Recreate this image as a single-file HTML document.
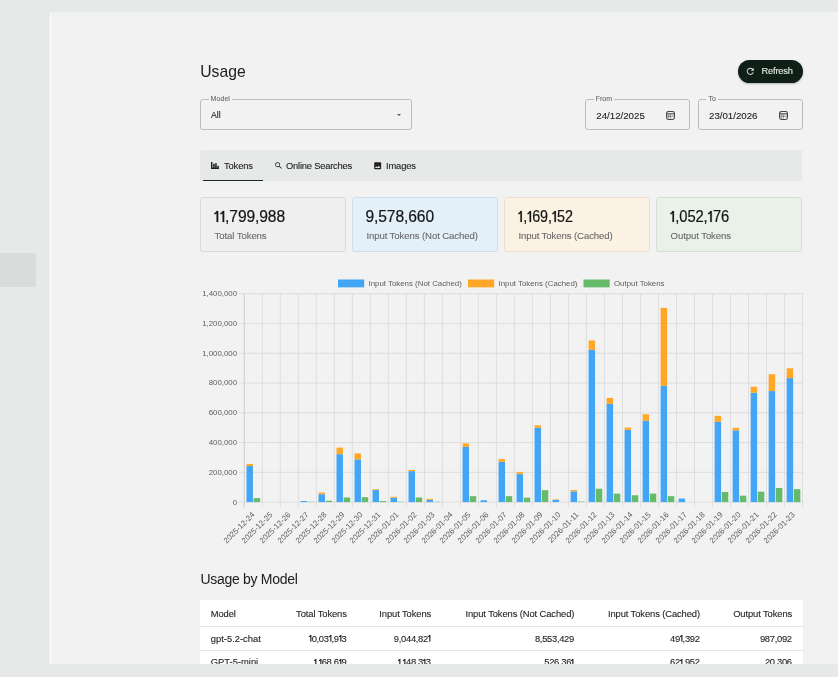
<!DOCTYPE html>
<html><head><meta charset="utf-8">
<style>
*{box-sizing:border-box;margin:0;padding:0}
html,body{width:838px;height:677px;overflow:hidden;background:#e6e9e8;font-family:"Liberation Sans",sans-serif;color:#1c1c1c}
.abs{position:absolute}
#panel{position:absolute;left:49px;top:12px;width:789px;height:652px;background:#f2f2f2;overflow:hidden}
#side{position:absolute;left:0;top:253px;width:36px;height:34px;background:#d8dcda;border-top-right-radius:2px;border-bottom-right-radius:2px}
.t{position:absolute;white-space:nowrap;line-height:1}
.field{position:absolute;border:1px solid #bdbdbd;border-radius:3px}
.flabel{position:absolute;top:-4.3px;font-size:7.1px;color:#6b6b6b;background:#f2f2f2;padding:0 2px;line-height:7px}
.card{position:absolute;top:197px;height:54.6px;width:146.3px;border:1px solid #dcdcdc;border-radius:2.5px}
.num{position:absolute;left:12.2px;top:11.2px;font-size:15.6px;color:#151515;line-height:1;white-space:nowrap;letter-spacing:-0.1px}
.lab{position:absolute;left:13.5px;top:32.6px;font-size:9.6px;letter-spacing:-0.1px;color:#6a6a6a;line-height:1;white-space:nowrap}
#bottom{position:absolute;left:0;top:664px;width:838px;height:13px;background:#e6e9e8}
table{border-collapse:collapse}
.th,.td{position:absolute;font-size:9.4px;-webkit-text-stroke:0.12px currentColor;line-height:1;white-space:nowrap;color:#222}
#w div{-webkit-text-stroke:0.1px currentColor}
#w .num{-webkit-text-stroke:0.2px currentColor}
.o{display:inline-block;width:0.36em;height:0.7em;vertical-align:baseline;overflow:visible}
.o2{width:0.30em}
#w{position:absolute;left:0;top:0;width:838px;height:677px;will-change:transform;overflow:hidden}
</style></head><body><div id="w">
<div id="side"></div>
<div id="panel"></div>
<div class="abs" style="left:47.6px;top:12px;width:1.4px;height:652px;background:#e3e7e5"></div>
<div class="abs" style="left:49.6px;top:12px;width:2.2px;height:652px;background:#f5f6f6"></div>
<div class="abs" style="left:49px;top:12.2px;width:789px;height:2.6px;background:#f0f2f1"></div>
<div class="t" style="left:200.2px;top:64.3px;font-size:15.7px;letter-spacing:0.05px;color:#1e1e1e;-webkit-text-stroke:0.02px currentColor">Usage</div>
<div class="abs" style="left:738.4px;top:59.6px;width:64.2px;height:23.4px;border-radius:12px;background:#0f1e17;box-shadow:0 1px 2px rgba(0,0,0,0.25)"></div>
<svg class="abs" style="left:745.25px;top:66.15px" width="10.5" height="10.5" viewBox="0 0 24 24"><path fill="#dfe6e2" d="M17.65 6.35A7.958 7.958 0 0 0 12 4c-4.42 0-7.99 3.58-7.99 8s3.57 8 7.99 8c3.73 0 6.84-2.55 7.73-6h-2.08A5.99 5.99 0 0 1 12 18c-3.31 0-6-2.69-6-6s2.69-6 6-6c1.66 0 3.14.69 4.22 1.78L13 11h7V4l-2.35 2.35z"/></svg>
<div class="t" style="left:761.6px;top:66.6px;font-size:9.3px;letter-spacing:-0.2px;color:#e6ece8">Refresh</div>

<div class="field" style="left:200px;top:98.8px;width:211.5px;height:31.6px"><div class="flabel" style="left:7.6px">Model</div></div>
<div class="t" style="left:211px;top:110.5px;font-size:8.7px">All</div>
<div class="abs" style="left:397px;top:114px;width:0;height:0;border-left:2.2px solid transparent;border-right:2.2px solid transparent;border-top:2.2px solid #555"></div>

<div class="field" style="left:585px;top:98.8px;width:105.4px;height:31.6px"><div class="flabel" style="left:7.6px">From</div></div>
<div class="t" style="left:596.3px;top:110.5px;font-size:9.7px">24/12/2025</div>
<div class="abs" style="left:665.9px;top:110.8px;line-height:0"><svg width="9" height="9" viewBox="0 0 9 9"><rect x="0.55" y="0.55" width="7.9" height="7.9" rx="1.9" fill="none" stroke="#474747" stroke-width="1.1"/><rect x="1" y="2.3" width="7" height="1.1" fill="#474747"/><line x1="2.6" y1="3.4" x2="2.6" y2="7.6" stroke="#6a6a6a" stroke-width="0.7"/><line x1="4.4" y1="3.4" x2="4.4" y2="7.6" stroke="#6a6a6a" stroke-width="0.7"/><line x1="1" y1="5.2" x2="8" y2="5.2" stroke="#6a6a6a" stroke-width="0.7"/></svg></div>
<div class="field" style="left:697.8px;top:98.8px;width:105.2px;height:31.6px"><div class="flabel" style="left:7.6px">To</div></div>
<div class="t" style="left:709px;top:110.5px;font-size:9.7px">23/01/2026</div>
<div class="abs" style="left:778.7px;top:110.8px;line-height:0"><svg width="9" height="9" viewBox="0 0 9 9"><rect x="0.55" y="0.55" width="7.9" height="7.9" rx="1.9" fill="none" stroke="#474747" stroke-width="1.1"/><rect x="1" y="2.3" width="7" height="1.1" fill="#474747"/><line x1="2.6" y1="3.4" x2="2.6" y2="7.6" stroke="#6a6a6a" stroke-width="0.7"/><line x1="4.4" y1="3.4" x2="4.4" y2="7.6" stroke="#6a6a6a" stroke-width="0.7"/><line x1="1" y1="5.2" x2="8" y2="5.2" stroke="#6a6a6a" stroke-width="0.7"/></svg></div>

<div class="abs" style="left:199.9px;top:150.3px;width:602.4px;height:30.5px;background:#e6e9e8;border-radius:2px"></div>
<div class="abs" style="left:202.8px;top:179.8px;width:60.2px;height:1.6px;background:#1b2b24"></div>
<svg class="abs" style="left:211.2px;top:161.9px" width="7.8" height="7" viewBox="0 0 7.8 7"><rect x="0" y="0" width="1.4" height="7" fill="#1e1e1e"/><rect x="0" y="5.7" width="7.8" height="1.3" fill="#1e1e1e"/><rect x="2.2" y="1.8" width="1.5" height="5" fill="#1e1e1e"/><rect x="4.2" y="1.2" width="1.5" height="5" fill="#1e1e1e"/><rect x="6.3" y="3.8" width="1.5" height="3" fill="#1e1e1e"/></svg>
<div class="t" style="left:224px;top:161.1px;font-size:9.4px;letter-spacing:-0.15px;color:#222">Tokens</div>
<svg class="abs" style="left:273.55px;top:161.15px" width="9.2" height="9.2" viewBox="0 0 24 24"><path fill="#222" d="M15.5 14h-.79l-.28-.27A6.471 6.471 0 0 0 16 9.5 6.5 6.5 0 1 0 9.5 16c1.61 0 3.09-.59 4.23-1.57l.27.28v.79l5 4.99L20.49 19l-4.99-5zm-6 0C7.01 14 5 11.99 5 9.5S7.01 5 9.5 5 14 7.01 14 9.5 11.99 14 9.5 14z"/></svg>
<div class="t" style="left:286px;top:161.1px;font-size:9.4px;letter-spacing:-0.22px;color:#222">Online Searches</div>
<svg class="abs" style="left:373.33px;top:161.13px" width="9.33" height="9.33" viewBox="0 0 24 24"><path fill="#222" d="M21 19V5c0-1.1-.9-2-2-2H5c-1.1 0-2 .9-2 2v14c0 1.1.9 2 2 2h14c1.1 0 2-.9 2-2zM8.5 13.5l2.5 3.01L14.5 12l4.5 6H5l3.5-4.5z"/></svg>
<div class="t" style="left:386px;top:161.1px;font-size:9.4px;letter-spacing:-0.15px;color:#222">Images</div>

<div class="card" style="left:200.1px;background:#efefef;border-color:#d9d9d9"><div class="num" style="left:12.8px"><svg class="o" viewBox="0 0 36 70"><path d="M16.5 0h10.5v70h-10.5V15C13 18.5 8.5 20.5 2.5 21.5v-9C9.5 11 14 6.5 16.5 0z" fill="currentColor" stroke="currentColor" stroke-width="1.2"/></svg><svg class="o" viewBox="0 0 36 70"><path d="M16.5 0h10.5v70h-10.5V15C13 18.5 8.5 20.5 2.5 21.5v-9C9.5 11 14 6.5 16.5 0z" fill="currentColor" stroke="currentColor" stroke-width="1.2"/></svg>,799,988</div><div class="lab">Total Tokens</div></div>
<div class="card" style="left:351.9px;background:#e3eff9;border-color:#d0dce6"><div class="num" style="left:12.6px">9,578,660</div><div class="lab">Input Tokens (Not Cached)</div></div>
<div class="card" style="left:503.9px;background:#fcf2e3;border-color:#ebdfcc"><div class="num" style="left:13.5px;transform:scaleX(0.92);transform-origin:0 0"><svg class="o" viewBox="0 0 36 70"><path d="M16.5 0h10.5v70h-10.5V15C13 18.5 8.5 20.5 2.5 21.5v-9C9.5 11 14 6.5 16.5 0z" fill="currentColor" stroke="currentColor" stroke-width="1.2"/></svg>,<svg class="o" viewBox="0 0 36 70"><path d="M16.5 0h10.5v70h-10.5V15C13 18.5 8.5 20.5 2.5 21.5v-9C9.5 11 14 6.5 16.5 0z" fill="currentColor" stroke="currentColor" stroke-width="1.2"/></svg>69,<svg class="o" viewBox="0 0 36 70"><path d="M16.5 0h10.5v70h-10.5V15C13 18.5 8.5 20.5 2.5 21.5v-9C9.5 11 14 6.5 16.5 0z" fill="currentColor" stroke="currentColor" stroke-width="1.2"/></svg>52</div><div class="lab">Input Tokens (Cached)</div></div>
<div class="card" style="left:656.1px;background:#e8f2e9;border-color:#d3dfd5"><div class="num" style="left:12.8px;transform:scaleX(0.945);transform-origin:0 0"><svg class="o" viewBox="0 0 36 70"><path d="M16.5 0h10.5v70h-10.5V15C13 18.5 8.5 20.5 2.5 21.5v-9C9.5 11 14 6.5 16.5 0z" fill="currentColor" stroke="currentColor" stroke-width="1.2"/></svg>,052,<svg class="o" viewBox="0 0 36 70"><path d="M16.5 0h10.5v70h-10.5V15C13 18.5 8.5 20.5 2.5 21.5v-9C9.5 11 14 6.5 16.5 0z" fill="currentColor" stroke="currentColor" stroke-width="1.2"/></svg>76</div><div class="lab">Output Tokens</div></div>

<svg width="838" height="677" viewBox="0 0 838 677" style="position:absolute;left:0;top:0" font-family="Liberation Sans, sans-serif">
<line x1="244.30" y1="293.70" x2="244.30" y2="507.30" stroke="#d7d7d7" stroke-width="0.75"/>
<line x1="262.31" y1="293.70" x2="262.31" y2="507.30" stroke="#d7d7d7" stroke-width="0.75"/>
<line x1="280.31" y1="293.70" x2="280.31" y2="507.30" stroke="#d7d7d7" stroke-width="0.75"/>
<line x1="298.32" y1="293.70" x2="298.32" y2="507.30" stroke="#d7d7d7" stroke-width="0.75"/>
<line x1="316.33" y1="293.70" x2="316.33" y2="507.30" stroke="#d7d7d7" stroke-width="0.75"/>
<line x1="334.33" y1="293.70" x2="334.33" y2="507.30" stroke="#d7d7d7" stroke-width="0.75"/>
<line x1="352.34" y1="293.70" x2="352.34" y2="507.30" stroke="#d7d7d7" stroke-width="0.75"/>
<line x1="370.35" y1="293.70" x2="370.35" y2="507.30" stroke="#d7d7d7" stroke-width="0.75"/>
<line x1="388.35" y1="293.70" x2="388.35" y2="507.30" stroke="#d7d7d7" stroke-width="0.75"/>
<line x1="406.36" y1="293.70" x2="406.36" y2="507.30" stroke="#d7d7d7" stroke-width="0.75"/>
<line x1="424.36" y1="293.70" x2="424.36" y2="507.30" stroke="#d7d7d7" stroke-width="0.75"/>
<line x1="442.37" y1="293.70" x2="442.37" y2="507.30" stroke="#d7d7d7" stroke-width="0.75"/>
<line x1="460.38" y1="293.70" x2="460.38" y2="507.30" stroke="#d7d7d7" stroke-width="0.75"/>
<line x1="478.38" y1="293.70" x2="478.38" y2="507.30" stroke="#d7d7d7" stroke-width="0.75"/>
<line x1="496.39" y1="293.70" x2="496.39" y2="507.30" stroke="#d7d7d7" stroke-width="0.75"/>
<line x1="514.40" y1="293.70" x2="514.40" y2="507.30" stroke="#d7d7d7" stroke-width="0.75"/>
<line x1="532.40" y1="293.70" x2="532.40" y2="507.30" stroke="#d7d7d7" stroke-width="0.75"/>
<line x1="550.41" y1="293.70" x2="550.41" y2="507.30" stroke="#d7d7d7" stroke-width="0.75"/>
<line x1="568.42" y1="293.70" x2="568.42" y2="507.30" stroke="#d7d7d7" stroke-width="0.75"/>
<line x1="586.42" y1="293.70" x2="586.42" y2="507.30" stroke="#d7d7d7" stroke-width="0.75"/>
<line x1="604.43" y1="293.70" x2="604.43" y2="507.30" stroke="#d7d7d7" stroke-width="0.75"/>
<line x1="622.44" y1="293.70" x2="622.44" y2="507.30" stroke="#d7d7d7" stroke-width="0.75"/>
<line x1="640.44" y1="293.70" x2="640.44" y2="507.30" stroke="#d7d7d7" stroke-width="0.75"/>
<line x1="658.45" y1="293.70" x2="658.45" y2="507.30" stroke="#d7d7d7" stroke-width="0.75"/>
<line x1="676.45" y1="293.70" x2="676.45" y2="507.30" stroke="#d7d7d7" stroke-width="0.75"/>
<line x1="694.46" y1="293.70" x2="694.46" y2="507.30" stroke="#d7d7d7" stroke-width="0.75"/>
<line x1="712.47" y1="293.70" x2="712.47" y2="507.30" stroke="#d7d7d7" stroke-width="0.75"/>
<line x1="730.47" y1="293.70" x2="730.47" y2="507.30" stroke="#d7d7d7" stroke-width="0.75"/>
<line x1="748.48" y1="293.70" x2="748.48" y2="507.30" stroke="#d7d7d7" stroke-width="0.75"/>
<line x1="766.49" y1="293.70" x2="766.49" y2="507.30" stroke="#d7d7d7" stroke-width="0.75"/>
<line x1="784.49" y1="293.70" x2="784.49" y2="507.30" stroke="#d7d7d7" stroke-width="0.75"/>
<line x1="802.50" y1="293.70" x2="802.50" y2="507.30" stroke="#d7d7d7" stroke-width="0.75"/>
<line x1="239.10" y1="502.10" x2="802.50" y2="502.10" stroke="#d7d7d7" stroke-width="0.75"/>
<text x="237.10" y="504.50" font-size="7.86" fill="#5c5c5c" text-anchor="end">0</text>
<line x1="239.10" y1="472.33" x2="802.50" y2="472.33" stroke="#d7d7d7" stroke-width="0.75"/>
<text x="237.10" y="474.73" font-size="7.86" fill="#5c5c5c" text-anchor="end">200,000</text>
<line x1="239.10" y1="442.56" x2="802.50" y2="442.56" stroke="#d7d7d7" stroke-width="0.75"/>
<text x="237.10" y="444.96" font-size="7.86" fill="#5c5c5c" text-anchor="end">400,000</text>
<line x1="239.10" y1="412.79" x2="802.50" y2="412.79" stroke="#d7d7d7" stroke-width="0.75"/>
<text x="237.10" y="415.19" font-size="7.86" fill="#5c5c5c" text-anchor="end">600,000</text>
<line x1="239.10" y1="383.01" x2="802.50" y2="383.01" stroke="#d7d7d7" stroke-width="0.75"/>
<text x="237.10" y="385.41" font-size="7.86" fill="#5c5c5c" text-anchor="end">800,000</text>
<line x1="239.10" y1="353.24" x2="802.50" y2="353.24" stroke="#d7d7d7" stroke-width="0.75"/>
<text x="237.10" y="355.64" font-size="7.86" fill="#5c5c5c" text-anchor="end">1,000,000</text>
<line x1="239.10" y1="323.47" x2="802.50" y2="323.47" stroke="#d7d7d7" stroke-width="0.75"/>
<text x="237.10" y="325.87" font-size="7.86" fill="#5c5c5c" text-anchor="end">1,200,000</text>
<line x1="239.10" y1="293.70" x2="802.50" y2="293.70" stroke="#d7d7d7" stroke-width="0.75"/>
<text x="237.10" y="296.10" font-size="7.86" fill="#5c5c5c" text-anchor="end">1,400,000</text>
<line x1="244.30" y1="293.70" x2="244.30" y2="507.30" stroke="#d0d0d0" stroke-width="0.8"/>
<rect x="246.46" y="465.93" width="6.48" height="36.17" fill="#42a5f5"/>
<rect x="246.46" y="463.99" width="6.48" height="1.94" fill="#ffa726"/>
<rect x="253.66" y="498.08" width="6.48" height="4.02" fill="#66bb6a"/>
<rect x="300.48" y="501.06" width="6.48" height="1.04" fill="#42a5f5"/>
<rect x="307.68" y="501.80" width="6.48" height="0.30" fill="#66bb6a"/>
<rect x="318.49" y="494.21" width="6.48" height="7.89" fill="#42a5f5"/>
<rect x="318.49" y="492.57" width="6.48" height="1.64" fill="#ffa726"/>
<rect x="325.69" y="500.76" width="6.48" height="1.34" fill="#66bb6a"/>
<rect x="336.49" y="454.17" width="6.48" height="47.93" fill="#42a5f5"/>
<rect x="336.49" y="447.62" width="6.48" height="6.55" fill="#ffa726"/>
<rect x="343.70" y="497.49" width="6.48" height="4.61" fill="#66bb6a"/>
<rect x="354.50" y="459.38" width="6.48" height="42.72" fill="#42a5f5"/>
<rect x="354.50" y="453.42" width="6.48" height="5.95" fill="#ffa726"/>
<rect x="361.70" y="497.19" width="6.48" height="4.91" fill="#66bb6a"/>
<rect x="372.51" y="490.04" width="6.48" height="12.06" fill="#42a5f5"/>
<rect x="372.51" y="489.30" width="6.48" height="0.74" fill="#ffa726"/>
<rect x="379.71" y="501.06" width="6.48" height="1.04" fill="#66bb6a"/>
<rect x="390.51" y="497.78" width="6.48" height="4.32" fill="#42a5f5"/>
<rect x="390.51" y="496.74" width="6.48" height="1.04" fill="#ffa726"/>
<rect x="397.71" y="501.80" width="6.48" height="0.30" fill="#66bb6a"/>
<rect x="408.52" y="471.14" width="6.48" height="30.96" fill="#42a5f5"/>
<rect x="408.52" y="469.95" width="6.48" height="1.19" fill="#ffa726"/>
<rect x="415.72" y="497.49" width="6.48" height="4.61" fill="#66bb6a"/>
<rect x="426.53" y="499.87" width="6.48" height="2.23" fill="#42a5f5"/>
<rect x="426.53" y="498.83" width="6.48" height="1.04" fill="#ffa726"/>
<rect x="433.73" y="501.80" width="6.48" height="0.30" fill="#66bb6a"/>
<rect x="462.54" y="446.87" width="6.48" height="55.23" fill="#42a5f5"/>
<rect x="462.54" y="443.45" width="6.48" height="3.42" fill="#ffa726"/>
<rect x="469.74" y="496.15" width="6.48" height="5.95" fill="#66bb6a"/>
<rect x="480.54" y="500.31" width="6.48" height="1.79" fill="#42a5f5"/>
<rect x="498.55" y="461.76" width="6.48" height="40.34" fill="#42a5f5"/>
<rect x="498.55" y="459.08" width="6.48" height="2.68" fill="#ffa726"/>
<rect x="505.75" y="496.15" width="6.48" height="5.95" fill="#66bb6a"/>
<rect x="516.56" y="474.11" width="6.48" height="27.99" fill="#42a5f5"/>
<rect x="516.56" y="472.18" width="6.48" height="1.94" fill="#ffa726"/>
<rect x="523.76" y="497.63" width="6.48" height="4.47" fill="#66bb6a"/>
<rect x="534.56" y="427.67" width="6.48" height="74.43" fill="#42a5f5"/>
<rect x="534.56" y="425.29" width="6.48" height="2.38" fill="#ffa726"/>
<rect x="541.77" y="490.19" width="6.48" height="11.91" fill="#66bb6a"/>
<rect x="552.57" y="499.87" width="6.48" height="2.23" fill="#42a5f5"/>
<rect x="552.57" y="499.42" width="6.48" height="0.45" fill="#ffa726"/>
<rect x="570.58" y="491.38" width="6.48" height="10.72" fill="#42a5f5"/>
<rect x="570.58" y="490.04" width="6.48" height="1.34" fill="#ffa726"/>
<rect x="577.78" y="501.65" width="6.48" height="0.45" fill="#66bb6a"/>
<rect x="588.58" y="349.82" width="6.48" height="152.28" fill="#42a5f5"/>
<rect x="588.58" y="340.44" width="6.48" height="9.38" fill="#ffa726"/>
<rect x="595.79" y="488.70" width="6.48" height="13.40" fill="#66bb6a"/>
<rect x="606.59" y="403.85" width="6.48" height="98.25" fill="#42a5f5"/>
<rect x="606.59" y="397.90" width="6.48" height="5.95" fill="#ffa726"/>
<rect x="613.79" y="493.62" width="6.48" height="8.48" fill="#66bb6a"/>
<rect x="624.60" y="429.90" width="6.48" height="72.20" fill="#42a5f5"/>
<rect x="624.60" y="427.52" width="6.48" height="2.38" fill="#ffa726"/>
<rect x="631.80" y="495.25" width="6.48" height="6.85" fill="#66bb6a"/>
<rect x="642.60" y="420.68" width="6.48" height="81.42" fill="#42a5f5"/>
<rect x="642.60" y="414.27" width="6.48" height="6.40" fill="#ffa726"/>
<rect x="649.81" y="493.62" width="6.48" height="8.48" fill="#66bb6a"/>
<rect x="660.61" y="385.84" width="6.48" height="116.26" fill="#42a5f5"/>
<rect x="660.61" y="307.84" width="6.48" height="78.00" fill="#ffa726"/>
<rect x="667.81" y="496.15" width="6.48" height="5.95" fill="#66bb6a"/>
<rect x="678.62" y="498.53" width="6.48" height="3.57" fill="#42a5f5"/>
<rect x="714.63" y="421.87" width="6.48" height="80.23" fill="#42a5f5"/>
<rect x="714.63" y="415.76" width="6.48" height="6.10" fill="#ffa726"/>
<rect x="721.83" y="491.98" width="6.48" height="10.12" fill="#66bb6a"/>
<rect x="732.63" y="430.35" width="6.48" height="71.75" fill="#42a5f5"/>
<rect x="732.63" y="427.82" width="6.48" height="2.53" fill="#ffa726"/>
<rect x="739.84" y="495.70" width="6.48" height="6.40" fill="#66bb6a"/>
<rect x="750.64" y="392.69" width="6.48" height="109.41" fill="#42a5f5"/>
<rect x="750.64" y="386.74" width="6.48" height="5.95" fill="#ffa726"/>
<rect x="757.84" y="491.68" width="6.48" height="10.42" fill="#66bb6a"/>
<rect x="768.65" y="391.05" width="6.48" height="111.05" fill="#42a5f5"/>
<rect x="768.65" y="374.23" width="6.48" height="16.82" fill="#ffa726"/>
<rect x="775.85" y="487.96" width="6.48" height="14.14" fill="#66bb6a"/>
<rect x="786.65" y="378.10" width="6.48" height="124.00" fill="#42a5f5"/>
<rect x="786.65" y="368.28" width="6.48" height="9.82" fill="#ffa726"/>
<rect x="793.86" y="489.15" width="6.48" height="12.95" fill="#66bb6a"/>
<text transform="translate(253.30,513.50) rotate(-45)" font-size="7.86" fill="#5c5c5c" text-anchor="end" dominant-baseline="central">2025-12-24</text>
<text transform="translate(271.31,513.50) rotate(-45)" font-size="7.86" fill="#5c5c5c" text-anchor="end" dominant-baseline="central">2025-12-25</text>
<text transform="translate(289.32,513.50) rotate(-45)" font-size="7.86" fill="#5c5c5c" text-anchor="end" dominant-baseline="central">2025-12-26</text>
<text transform="translate(307.32,513.50) rotate(-45)" font-size="7.86" fill="#5c5c5c" text-anchor="end" dominant-baseline="central">2025-12-27</text>
<text transform="translate(325.33,513.50) rotate(-45)" font-size="7.86" fill="#5c5c5c" text-anchor="end" dominant-baseline="central">2025-12-28</text>
<text transform="translate(343.34,513.50) rotate(-45)" font-size="7.86" fill="#5c5c5c" text-anchor="end" dominant-baseline="central">2025-12-29</text>
<text transform="translate(361.34,513.50) rotate(-45)" font-size="7.86" fill="#5c5c5c" text-anchor="end" dominant-baseline="central">2025-12-30</text>
<text transform="translate(379.35,513.50) rotate(-45)" font-size="7.86" fill="#5c5c5c" text-anchor="end" dominant-baseline="central">2025-12-31</text>
<text transform="translate(397.35,513.50) rotate(-45)" font-size="7.86" fill="#5c5c5c" text-anchor="end" dominant-baseline="central">2026-01-01</text>
<text transform="translate(415.36,513.50) rotate(-45)" font-size="7.86" fill="#5c5c5c" text-anchor="end" dominant-baseline="central">2026-01-02</text>
<text transform="translate(433.37,513.50) rotate(-45)" font-size="7.86" fill="#5c5c5c" text-anchor="end" dominant-baseline="central">2026-01-03</text>
<text transform="translate(451.37,513.50) rotate(-45)" font-size="7.86" fill="#5c5c5c" text-anchor="end" dominant-baseline="central">2026-01-04</text>
<text transform="translate(469.38,513.50) rotate(-45)" font-size="7.86" fill="#5c5c5c" text-anchor="end" dominant-baseline="central">2026-01-05</text>
<text transform="translate(487.39,513.50) rotate(-45)" font-size="7.86" fill="#5c5c5c" text-anchor="end" dominant-baseline="central">2026-01-06</text>
<text transform="translate(505.39,513.50) rotate(-45)" font-size="7.86" fill="#5c5c5c" text-anchor="end" dominant-baseline="central">2026-01-07</text>
<text transform="translate(523.40,513.50) rotate(-45)" font-size="7.86" fill="#5c5c5c" text-anchor="end" dominant-baseline="central">2026-01-08</text>
<text transform="translate(541.41,513.50) rotate(-45)" font-size="7.86" fill="#5c5c5c" text-anchor="end" dominant-baseline="central">2026-01-09</text>
<text transform="translate(559.41,513.50) rotate(-45)" font-size="7.86" fill="#5c5c5c" text-anchor="end" dominant-baseline="central">2026-01-10</text>
<text transform="translate(577.42,513.50) rotate(-45)" font-size="7.86" fill="#5c5c5c" text-anchor="end" dominant-baseline="central">2026-01-11</text>
<text transform="translate(595.43,513.50) rotate(-45)" font-size="7.86" fill="#5c5c5c" text-anchor="end" dominant-baseline="central">2026-01-12</text>
<text transform="translate(613.43,513.50) rotate(-45)" font-size="7.86" fill="#5c5c5c" text-anchor="end" dominant-baseline="central">2026-01-13</text>
<text transform="translate(631.44,513.50) rotate(-45)" font-size="7.86" fill="#5c5c5c" text-anchor="end" dominant-baseline="central">2026-01-14</text>
<text transform="translate(649.45,513.50) rotate(-45)" font-size="7.86" fill="#5c5c5c" text-anchor="end" dominant-baseline="central">2026-01-15</text>
<text transform="translate(667.45,513.50) rotate(-45)" font-size="7.86" fill="#5c5c5c" text-anchor="end" dominant-baseline="central">2026-01-16</text>
<text transform="translate(685.46,513.50) rotate(-45)" font-size="7.86" fill="#5c5c5c" text-anchor="end" dominant-baseline="central">2026-01-17</text>
<text transform="translate(703.46,513.50) rotate(-45)" font-size="7.86" fill="#5c5c5c" text-anchor="end" dominant-baseline="central">2026-01-18</text>
<text transform="translate(721.47,513.50) rotate(-45)" font-size="7.86" fill="#5c5c5c" text-anchor="end" dominant-baseline="central">2026-01-19</text>
<text transform="translate(739.48,513.50) rotate(-45)" font-size="7.86" fill="#5c5c5c" text-anchor="end" dominant-baseline="central">2026-01-20</text>
<text transform="translate(757.48,513.50) rotate(-45)" font-size="7.86" fill="#5c5c5c" text-anchor="end" dominant-baseline="central">2026-01-21</text>
<text transform="translate(775.49,513.50) rotate(-45)" font-size="7.86" fill="#5c5c5c" text-anchor="end" dominant-baseline="central">2026-01-22</text>
<text transform="translate(793.50,513.50) rotate(-45)" font-size="7.86" fill="#5c5c5c" text-anchor="end" dominant-baseline="central">2026-01-23</text>
<rect x="338.0" y="279.5" width="26.2" height="7.86" fill="#42a5f5"/>
<text x="368.5" y="286.3" font-size="7.86" fill="#5c5c5c">Input Tokens (Not Cached)</text>
<rect x="468.0" y="279.5" width="26.2" height="7.86" fill="#ffa726"/>
<text x="498.5" y="286.3" font-size="7.86" fill="#5c5c5c">Input Tokens (Cached)</text>
<rect x="583.5" y="279.5" width="26.2" height="7.86" fill="#66bb6a"/>
<text x="614.0" y="286.3" font-size="7.86" fill="#5c5c5c">Output Tokens</text>
</svg>

<div class="t" style="left:200.5px;top:572.1px;font-size:14px;letter-spacing:-0.3px;color:#1e1e1e;-webkit-text-stroke:0.02px currentColor">Usage by Model</div>
<div class="abs" style="left:199.8px;top:599.8px;width:603px;height:80px;background:#ffffff"></div>
<div class="abs" style="left:199.8px;top:625.8px;width:603px;height:0.9px;background:#e4e4e4"></div>
<div class="abs" style="left:199.8px;top:649.7px;width:603px;height:0.9px;background:#e4e4e4"></div>
<div class="td" style="left:210.8px;top:609.0px;letter-spacing:-0.1px">Model</div>
<div class="td" style="left:210.8px;top:633.6px;letter-spacing:0px">gpt-5.2-chat</div>
<div class="td" style="left:210.8px;top:657.4px;letter-spacing:0px">GPT-5-mini</div>
<div class="td" style="right:491.20px;top:609.0px;letter-spacing:-0.1px">Total Tokens</div>
<div class="td" style="right:491.55px;top:633.6px;letter-spacing:-0.3px"><svg class="o o2" viewBox="2 0 30 70"><path d="M16.5 0h10.5v70h-10.5V15C13 18.5 8.5 20.5 2.5 21.5v-9C9.5 11 14 6.5 16.5 0z" fill="currentColor" stroke="currentColor" stroke-width="2"/></svg>0,03<svg class="o o2" viewBox="2 0 30 70"><path d="M16.5 0h10.5v70h-10.5V15C13 18.5 8.5 20.5 2.5 21.5v-9C9.5 11 14 6.5 16.5 0z" fill="currentColor" stroke="currentColor" stroke-width="2"/></svg>,9<svg class="o o2" viewBox="2 0 30 70"><path d="M16.5 0h10.5v70h-10.5V15C13 18.5 8.5 20.5 2.5 21.5v-9C9.5 11 14 6.5 16.5 0z" fill="currentColor" stroke="currentColor" stroke-width="2"/></svg>3</div>
<div class="td" style="right:491.55px;top:657.4px;letter-spacing:-0.3px"><svg class="o o2" viewBox="2 0 30 70"><path d="M16.5 0h10.5v70h-10.5V15C13 18.5 8.5 20.5 2.5 21.5v-9C9.5 11 14 6.5 16.5 0z" fill="currentColor" stroke="currentColor" stroke-width="2"/></svg>,<svg class="o o2" viewBox="2 0 30 70"><path d="M16.5 0h10.5v70h-10.5V15C13 18.5 8.5 20.5 2.5 21.5v-9C9.5 11 14 6.5 16.5 0z" fill="currentColor" stroke="currentColor" stroke-width="2"/></svg>68,6<svg class="o o2" viewBox="2 0 30 70"><path d="M16.5 0h10.5v70h-10.5V15C13 18.5 8.5 20.5 2.5 21.5v-9C9.5 11 14 6.5 16.5 0z" fill="currentColor" stroke="currentColor" stroke-width="2"/></svg>9</div>
<div class="td" style="right:406.90px;top:609.0px;letter-spacing:-0.1px">Input Tokens</div>
<div class="td" style="right:407.25px;top:633.6px;letter-spacing:-0.3px">9,044,82<svg class="o o2" viewBox="2 0 30 70"><path d="M16.5 0h10.5v70h-10.5V15C13 18.5 8.5 20.5 2.5 21.5v-9C9.5 11 14 6.5 16.5 0z" fill="currentColor" stroke="currentColor" stroke-width="2"/></svg></div>
<div class="td" style="right:407.25px;top:657.4px;letter-spacing:-0.3px"><svg class="o o2" viewBox="2 0 30 70"><path d="M16.5 0h10.5v70h-10.5V15C13 18.5 8.5 20.5 2.5 21.5v-9C9.5 11 14 6.5 16.5 0z" fill="currentColor" stroke="currentColor" stroke-width="2"/></svg>,<svg class="o o2" viewBox="2 0 30 70"><path d="M16.5 0h10.5v70h-10.5V15C13 18.5 8.5 20.5 2.5 21.5v-9C9.5 11 14 6.5 16.5 0z" fill="currentColor" stroke="currentColor" stroke-width="2"/></svg>48,3<svg class="o o2" viewBox="2 0 30 70"><path d="M16.5 0h10.5v70h-10.5V15C13 18.5 8.5 20.5 2.5 21.5v-9C9.5 11 14 6.5 16.5 0z" fill="currentColor" stroke="currentColor" stroke-width="2"/></svg>3</div>
<div class="td" style="right:263.70px;top:609.0px;letter-spacing:-0.1px">Input Tokens (Not Cached)</div>
<div class="td" style="right:264.05px;top:633.6px;letter-spacing:-0.3px">8,553,429</div>
<div class="td" style="right:264.05px;top:657.4px;letter-spacing:-0.3px">526,36<svg class="o o2" viewBox="2 0 30 70"><path d="M16.5 0h10.5v70h-10.5V15C13 18.5 8.5 20.5 2.5 21.5v-9C9.5 11 14 6.5 16.5 0z" fill="currentColor" stroke="currentColor" stroke-width="2"/></svg></div>
<div class="td" style="right:138.00px;top:609.0px;letter-spacing:-0.1px">Input Tokens (Cached)</div>
<div class="td" style="right:138.35px;top:633.6px;letter-spacing:-0.3px">49<svg class="o o2" viewBox="2 0 30 70"><path d="M16.5 0h10.5v70h-10.5V15C13 18.5 8.5 20.5 2.5 21.5v-9C9.5 11 14 6.5 16.5 0z" fill="currentColor" stroke="currentColor" stroke-width="2"/></svg>,392</div>
<div class="td" style="right:138.35px;top:657.4px;letter-spacing:-0.3px">62<svg class="o o2" viewBox="2 0 30 70"><path d="M16.5 0h10.5v70h-10.5V15C13 18.5 8.5 20.5 2.5 21.5v-9C9.5 11 14 6.5 16.5 0z" fill="currentColor" stroke="currentColor" stroke-width="2"/></svg>,952</div>
<div class="td" style="right:45.90px;top:609.0px;letter-spacing:-0.1px">Output Tokens</div>
<div class="td" style="right:46.25px;top:633.6px;letter-spacing:-0.3px">987,092</div>
<div class="td" style="right:46.25px;top:657.4px;letter-spacing:-0.3px">20,306</div>
<div id="bottom"></div>
</div></body></html>
